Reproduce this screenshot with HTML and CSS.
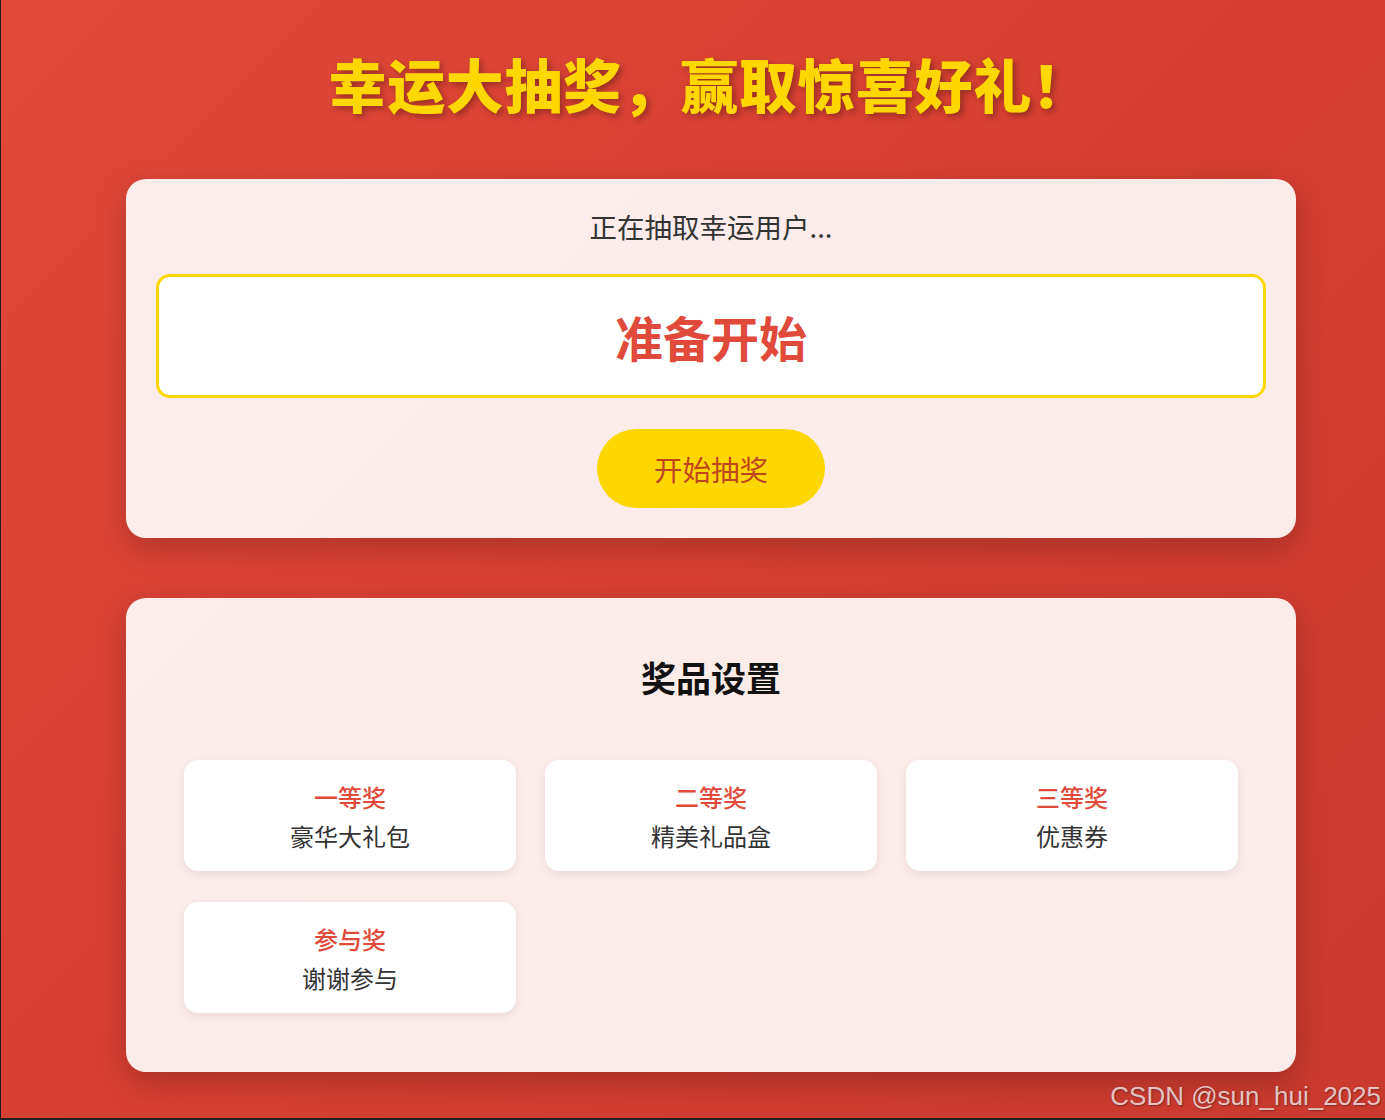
FILE: index.html
```html
<!DOCTYPE html>
<html lang="zh-CN">
<head>
<meta charset="UTF-8">
<title>幸运大抽奖</title>
<link rel="stylesheet" href="styles.css">
</head>
<body>
  <div class="page">
    <h1 class="title">幸运大抽奖，赢取惊喜好礼！</h1>
    <main class="container">
      <section class="card draw-card">
        <p class="status">正在抽取幸运用户...</p>
        <div class="display">准备开始</div>
        <button class="start-btn" type="button">开始抽奖</button>
      </section>
      <section class="card prize-card">
        <h2 class="prize-title">奖品设置</h2>
        <div class="prize-grid">
          <div class="prize-item">
            <div class="prize-label">一等奖</div>
            <div class="prize-desc">豪华大礼包</div>
          </div>
          <div class="prize-item">
            <div class="prize-label">二等奖</div>
            <div class="prize-desc">精美礼品盒</div>
          </div>
          <div class="prize-item">
            <div class="prize-label">三等奖</div>
            <div class="prize-desc">优惠券</div>
          </div>
          <div class="prize-item">
            <div class="prize-label">参与奖</div>
            <div class="prize-desc">谢谢参与</div>
          </div>
        </div>
      </section>
    </main>
    <div class="watermark">CSDN @sun_hui_2025</div>
  </div>
</body>
</html>
```

FILE: styles.css
```css
html {
  background: #1f2022;
  margin: 0;
  padding: 0;
}

body {
  margin: 0;
  padding: 0 0 2px 1px;
  font-family: "Noto Sans CJK SC", "Noto Sans", sans-serif;
}

.page {
  position: relative;
  height: 1118px;
  overflow: hidden;
  background: linear-gradient(135deg, #e04838 0%, #d53f31 50%, #c93a2e 100%);
  padding-top: 48px;
  box-sizing: border-box;
}

.title {
  margin: 0;
  padding-left: 33px;
  text-align: center;
  font-size: 58px;
  line-height: 70px;
  font-weight: 900;
  color: #ffd700;
  text-shadow: 3px 3px 6px rgba(0, 0, 0, 0.3);
  letter-spacing: 0.6px;
}

.container {
  width: 1170px;
  margin: 61px 0 0 125px;
  display: flex;
  flex-direction: column;
  gap: 60px;
}

.card {
  background: rgba(255, 255, 255, 0.9);
  border-radius: 20px;
  box-shadow: 0 10px 30px rgba(0, 0, 0, 0.2);
}

.draw-card {
  padding: 28px 30px 30px;
  display: flex;
  flex-direction: column;
  align-items: center;
}

.status {
  margin: 0;
  font-size: 27.5px;
  line-height: 38px;
  color: #333;
}

.display {
  align-self: stretch;
  margin-top: 29px;
  background: #fff;
  border: 3px solid #ffd700;
  border-radius: 14px;
  height: 118px;
  display: flex;
  align-items: center;
  justify-content: center;
  font-size: 48px;
  font-weight: bold;
  color: #e04a3a;
}

.start-btn {
  margin-top: 31px;
  border: none;
  background: #ffd700;
  color: #c0451f;
  font-family: inherit;
  font-size: 28.5px;
  line-height: 39px;
  padding: 20px 57px;
  border-radius: 40px;
  cursor: pointer;
}

.prize-card {
  padding: 54px 58px 59px;
}

.prize-title {
  margin: 0;
  text-align: center;
  font-size: 35px;
  line-height: 50px;
  font-weight: bold;
  color: #111;
}

.prize-grid {
  margin-top: 58px;
  display: grid;
  grid-template-columns: repeat(3, 1fr);
  gap: 31px 29px;
}

.prize-item {
  background: #fff;
  border-radius: 14px;
  box-shadow: 0 3px 10px rgba(0, 0, 0, 0.08);
  padding: 19px 10px 17px;
  text-align: center;
}

.prize-label {
  font-size: 24px;
  line-height: 36px;
  font-weight: 500;
  color: #e04a3a;
}

.prize-desc {
  margin-top: 3px;
  font-size: 24px;
  line-height: 36px;
  color: #333;
}

.watermark {
  position: absolute;
  right: 4px;
  bottom: 7px;
  font-family: "Liberation Sans", Arial, sans-serif;
  font-size: 26px;
  line-height: 30px;
  color: rgba(255, 255, 255, 0.72);
  text-shadow: 1px 1px 2px rgba(0, 0, 0, 0.35);
}
```
